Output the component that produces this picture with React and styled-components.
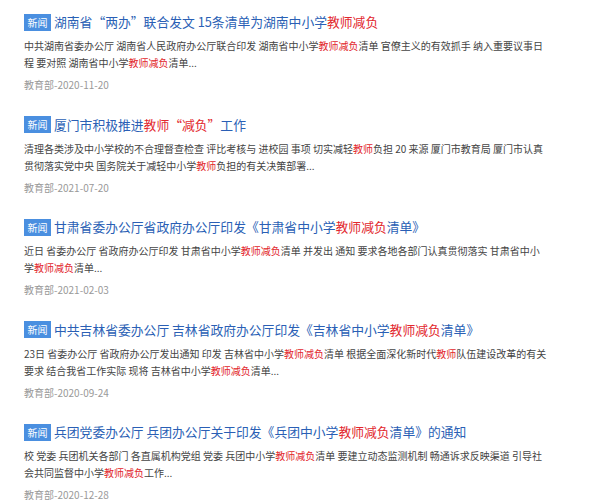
import React from "react";
import styled, { createGlobalStyle } from "styled-components";

const Global = createGlobalStyle`
  html, body { margin: 0; padding: 0; background: #fff; }
  body { font-family: "Noto Sans CJK SC", "Noto Sans", sans-serif; }
`;

const List = styled.div`
  width: 524px;
  padding: 11px 0 0 24px;
  display: flex;
  flex-direction: column;
  gap: 20.5px;
`;

const Item = styled.div`
  display: flex;
  flex-direction: column;
`;

const TitleRow = styled.div`
  display: flex;
  align-items: center;
  gap: 3px;
  height: 22px;
`;

const Badge = styled.span`
  display: inline-flex;
  align-items: center;
  justify-content: center;
  width: 27px;
  height: 17px;
  background: #4a8fe0;
  color: #fff;
  font-size: 10px;
  line-height: 17px;
  flex-shrink: 0;
`;

const Title = styled.a`
  font-size: 12.8px;
  line-height: 22px;
  color: #2a5fb5;
  text-decoration: none;
  white-space: nowrap;
`;

const Em = styled.span`
  color: #e2262c;
`;

const Desc = styled.p`
  margin: 4px 0 0;
  font-size: 10px;
  line-height: 17px;
  color: #444;
`;

const Meta = styled.div`
  margin-top: 5px;
  font-size: 10px;
  line-height: 17px;
  color: #999;
`;

const render = (parts) =>
  parts.map((p, i) => (typeof p === "string" ? p : <Em key={i}>{p.r}</Em>));

const items = [
  {
    title: ["湖南省“两办”联合发文 15条清单为湖南中小学", { r: "教师减负" }],
    desc: [
      "中共湖南省委办公厅 湖南省人民政府办公厅联合印发 湖南省中小学",
      { r: "教师减负" },
      "清单 官僚主义的有效抓手 纳入重要议事日程 要对照 湖南省中小学",
      { r: "教师减负" },
      "清单...",
    ],
    meta: "教育部-2020-11-20",
  },
  {
    title: ["厦门市积极推进", { r: "教师“减负”" }, "工作"],
    desc: [
      "清理各类涉及中小学校的不合理督查检查 评比考核与 进校园 事项 切实减轻",
      { r: "教师" },
      "负担 20 来源 厦门市教育局 厦门市认真贯彻落实党中央 国务院关于减轻中小学",
      { r: "教师" },
      "负担的有关决策部署...",
    ],
    meta: "教育部-2021-07-20",
  },
  {
    title: ["甘肃省委办公厅省政府办公厅印发《甘肃省中小学", { r: "教师减负" }, "清单》"],
    desc: [
      "近日 省委办公厅 省政府办公厅印发 甘肃省中小学",
      { r: "教师减负" },
      "清单 并发出 通知 要求各地各部门认真贯彻落实 甘肃省中小学",
      { r: "教师减负" },
      "清单...",
    ],
    meta: "教育部-2021-02-03",
  },
  {
    title: ["中共吉林省委办公厅 吉林省政府办公厅印发《吉林省中小学", { r: "教师减负" }, "清单》"],
    desc: [
      "23日 省委办公厅 省政府办公厅发出通知 印发 吉林省中小学",
      { r: "教师减负" },
      "清单 根据全面深化新时代",
      { r: "教师" },
      "队伍建设改革的有关要求 结合我省工作实际 现将 吉林省中小学",
      { r: "教师减负" },
      "清单...",
    ],
    meta: "教育部-2020-09-24",
  },
  {
    title: ["兵团党委办公厅 兵团办公厅关于印发《兵团中小学", { r: "教师减负" }, "清单》的通知"],
    desc: [
      "校 党委 兵团机关各部门 各直属机构党组 党委 兵团中小学",
      { r: "教师减负" },
      "清单 要建立动态监测机制 畅通诉求反映渠道 引导社会共同监督中小学",
      { r: "教师减负" },
      "工作...",
    ],
    meta: "教育部-2020-12-28",
  },
];

export default function App() {
  return (
    <>
      <Global />
      <List>
        {items.map((it, i) => (
          <Item key={i}>
            <TitleRow>
              <Badge>新闻</Badge>
              <Title href="#">{render(it.title)}</Title>
            </TitleRow>
            <Desc>{render(it.desc)}</Desc>
            <Meta>{it.meta}</Meta>
          </Item>
        ))}
      </List>
    </>
  );
}
